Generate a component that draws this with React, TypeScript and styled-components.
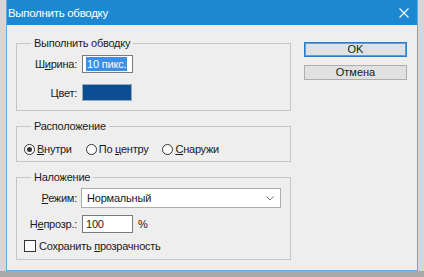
import React from 'react';
import styled, { createGlobalStyle } from 'styled-components';

const Global = createGlobalStyle`
  html, body { margin: 0; padding: 0; }
  body {
    height: 277px;
    overflow: hidden;
    background: linear-gradient(#d6d6d6 0 271px, #a8a8a8 271px);
    font-family: "Liberation Sans", Arial, sans-serif;
    font-size: 11px;
    color: #1a1a1a;
  }
`;

const Window = styled.div`
  margin-left: 6px;
  width: 412px;
  height: 271px;
  box-sizing: border-box;
  border: 1px solid #62abdf;
  border-top: none;
  background: #eeeeee;
  display: flex;
  flex-direction: column;
`;

const TitleBar = styled.div`
  height: 25px;
  flex: none;
  background: #1d88d2;
  color: #ffffff;
  display: flex;
  align-items: center;
  justify-content: space-between;
  padding: 0 8px 0 1px;
  font-size: 11.5px;
  letter-spacing: -0.3px;
`;

const Body = styled.div`
  display: flex;
  gap: 13px;
  padding: 12px 9px 0 9px;
`;

const LeftColumn = styled.div`
  width: 275px;
  display: flex;
  flex-direction: column;
  gap: 9px;
`;

const RightColumn = styled.div`
  width: 103px;
  display: flex;
  flex-direction: column;
  gap: 8px;
  padding-top: 5px;
`;

const Group = styled.fieldset`
  margin: 0;
  padding: 0;
  min-width: 0;
  border: 1px solid #c6c6c6;
`;

const Legend = styled.legend`
  margin-left: 14px;
  padding: 0 3px;
  height: 13px;
  line-height: 13px;
  font-size: 11px;
  letter-spacing: -0.25px;
  color: #1a1a1a;
`;

const FormGrid = styled.div<{ $pt: number; $pb: number; $gap: number }>`
  display: grid;
  grid-template-columns: 60px auto;
  column-gap: 5px;
  row-gap: ${p => p.$gap}px;
  align-items: center;
  padding: ${p => p.$pt}px 0 ${p => p.$pb}px 0;
`;

const Label = styled.div`
  text-align: right;
  letter-spacing: -0.25px;
  white-space: nowrap;
`;

const Mn = styled.span`
  text-decoration: underline;
  text-underline-offset: 1px;
`;

const TextField = styled.div<{ $w: number }>`
  width: ${p => p.$w}px;
  height: 18px;
  box-sizing: border-box;
  border: 1px solid #7a7a7a;
  background: #ffffff;
  display: flex;
  align-items: center;
  padding-left: 3px;
  font-size: 11px;
  letter-spacing: -0.2px;
`;

const Selected = styled.span`
  background: #3b8fe6;
  color: #ffffff;
  line-height: 14px;
  padding: 0 1px;
`;

const Swatch = styled.div`
  width: 50px;
  height: 17px;
  box-sizing: border-box;
  border: 1px solid #9aa7b5;
  background: #0b4e93;
`;

const FieldRow = styled.div`
  display: flex;
  align-items: center;
  gap: 5px;
`;

const SelectBox = styled.div`
  width: 200px;
  height: 20px;
  margin-left: -1px;
  box-sizing: border-box;
  border: 1px solid #acacac;
  background: #ffffff;
  display: flex;
  align-items: center;
  justify-content: space-between;
  padding: 0 6px 0 5px;
  letter-spacing: -0.2px;
`;

const RadioRow = styled.div`
  display: flex;
  align-items: center;
  gap: 14px;
  height: 16px;
  padding: 8px 0 4px 7px;
`;

const Option = styled.div`
  display: flex;
  align-items: center;
  gap: 2px;
  letter-spacing: -0.25px;
`;

const RadioCircle = styled.span<{ $checked?: boolean }>`
  width: 11px;
  height: 11px;
  box-sizing: border-box;
  border: 1px solid #333333;
  border-radius: 50%;
  background: #ffffff;
  display: flex;
  align-items: center;
  justify-content: center;
  &::after {
    content: '';
    width: 5px;
    height: 5px;
    border-radius: 50%;
    background: ${p => (p.$checked ? '#333333' : 'transparent')};
  }
`;

const CheckRow = styled.div`
  display: flex;
  align-items: center;
  gap: 3px;
  height: 12px;
  padding: 7px 0 7px 7px;
  letter-spacing: -0.25px;
`;

const CheckBox = styled.span`
  width: 12px;
  height: 12px;
  box-sizing: border-box;
  border: 1px solid #333333;
  background: #ffffff;
`;

const Button = styled.button<{ $primary?: boolean }>`
  height: 15px;
  width: 103px;
  box-sizing: border-box;
  margin: 0;
  padding: 0;
  background: #e1e1e1;
  border: 1px solid ${p => (p.$primary ? '#2f7cc6' : '#adadad')};
  box-shadow: ${p => (p.$primary ? 'inset 0 0 0 1px #5a9fe0' : 'none')};
  font-family: "Liberation Sans", Arial, sans-serif;
  font-size: 11px;
  line-height: 13px;
  color: #1a1a1a;
`;

const Chevron = () => (
  <svg width="8" height="5" viewBox="0 0 8 5">
    <path d="M0.5 0.5 L4 4 L7.5 0.5" fill="none" stroke="#777" strokeWidth="1" />
  </svg>
);

const CloseIcon = () => (
  <svg width="10" height="10" viewBox="0 0 10 10">
    <path d="M0.5 0.5 L9.5 9.5 M9.5 0.5 L0.5 9.5" stroke="#ffffff" strokeWidth="1.1" />
  </svg>
);

export default function App() {
  return (
    <>
      <Global />
      <Window>
        <TitleBar>
          <span>Выполнить обводку</span>
          <CloseIcon />
        </TitleBar>
        <Body>
          <LeftColumn>
            <Group>
              <Legend>Выполнить обводку</Legend>
              <FormGrid $pt={5} $pb={9} $gap={11}>
                <Label>Ш<Mn>и</Mn>рина:</Label>
                <TextField $w={51}>
                  <Selected>10 пикс.</Selected>
                </TextField>
                <Label>Цвет:</Label>
                <Swatch />
              </FormGrid>
            </Group>
            <Group>
              <Legend>Расположение</Legend>
              <RadioRow>
                <Option>
                  <RadioCircle $checked />
                  <span><Mn>В</Mn>нутри</span>
                </Option>
                <Option>
                  <RadioCircle />
                  <span>По <Mn>ц</Mn>ентру</span>
                </Option>
                <Option>
                  <RadioCircle />
                  <span><Mn>С</Mn>наружи</span>
                </Option>
              </RadioRow>
            </Group>
            <Group>
              <Legend>Наложение</Legend>
              <FormGrid $pt={4} $pb={0} $gap={7}>
                <Label><Mn>Р</Mn>ежим:</Label>
                <SelectBox>
                  <span>Нормальный</span>
                  <Chevron />
                </SelectBox>
                <Label>Н<Mn>е</Mn>прозр.:</Label>
                <FieldRow>
                  <TextField $w={51}>100</TextField>
                  <span>%</span>
                </FieldRow>
              </FormGrid>
              <CheckRow>
                <CheckBox />
                <span>Сохранить <Mn>п</Mn>розрачность</span>
              </CheckRow>
            </Group>
          </LeftColumn>
          <RightColumn>
            <Button $primary>OK</Button>
            <Button>Отмена</Button>
          </RightColumn>
        </Body>
      </Window>
    </>
  );
}
